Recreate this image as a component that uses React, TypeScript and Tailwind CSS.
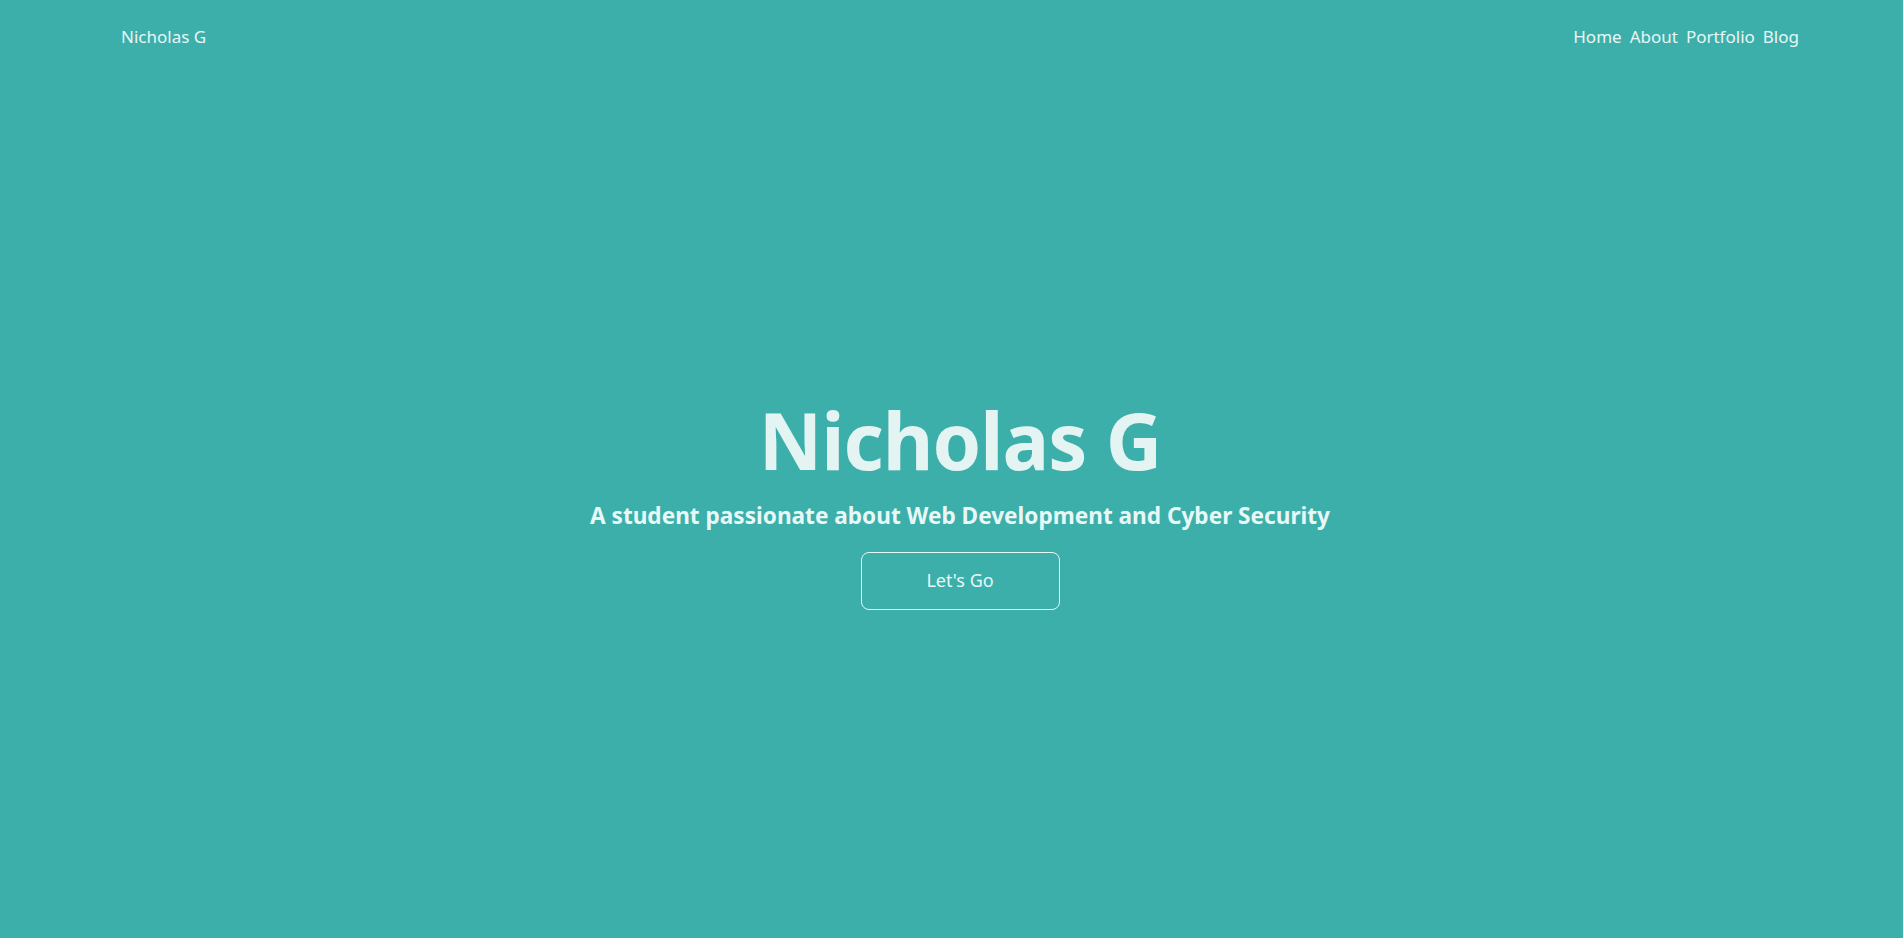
import React from "react";

export default function App() {
  const font = { fontFamily: '"Noto Sans", "Open Sans", sans-serif' };
  return (
    <div className="relative h-[938px] w-full overflow-hidden bg-[#3cafab] text-[#e6f7f6]" style={font}>
      <nav className="relative z-10 flex items-center justify-between pl-[121px] pr-[104px] pt-[26px]">
        <a className="text-[17px] leading-[22px] text-[#e6f7f6]">Nicholas G</a>
        <ul className="flex gap-[8px] text-[17px] leading-[22px]">
          <li>Home</li>
          <li>About</li>
          <li>Portfolio</li>
          <li>Blog</li>
        </ul>
      </nav>
      <div className="absolute inset-0 flex flex-col items-center justify-center pl-[17px] pt-[66px]">
        <h1 className="text-[78px] font-bold leading-[90px] tracking-[-1px] text-[#e3f4f3]">Nicholas G</h1>
        <p className="mt-[16px] text-[22.6px] font-bold leading-[30px] text-[#e8f8f7]">
          A student passionate about Web Development and Cyber Security
        </p>
        <button className="mt-[21px] h-[58px] w-[199px] rounded-[8px] border border-[#e8f8f7] text-[18px] text-[#e8f8f7]">
          Let's Go
        </button>
      </div>
    </div>
  );
}
